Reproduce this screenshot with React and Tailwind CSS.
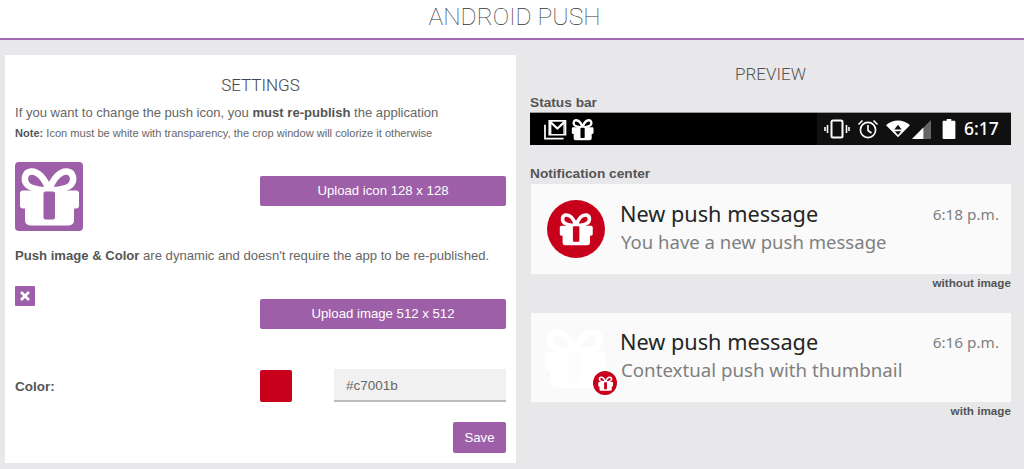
const helv = "font-['Helvetica_Neue','Liberation_Sans',Arial,sans-serif]";

function Gift({ className, fg = "#fff", bg = "#9d5fa8" }) {
  return (
    <svg viewBox="0 0 68 68" className={className}>
      <path d="M34 28 C30 16 23 8.5 16 9 C9.5 9.5 8.5 17 11.5 21.5 C15 26.5 25 27.5 34 28 C43 27.5 53 26.5 56.5 21.5 C59.5 17 58.5 9.5 52 9 C45 8.5 38 16 34 28 Z" fill="none" stroke={fg} strokeWidth="6.5" />
      <path d="M8 28 H61 A3 3 0 0 1 64 31 V43 A3 3 0 0 1 61 46 H59 V58 A5 5 0 0 1 54 63 H15 A5 5 0 0 1 10 58 V46 H8 A3 3 0 0 1 5 43 V31 A3 3 0 0 1 8 28 Z" fill={fg} />
      <rect x="28.5" y="29" width="11.5" height="28" rx="2" fill={bg} />
    </svg>
  );
}

function PurpleButton({ children }) {
  return (
    <div className="h-[30px] bg-[#9d5fa8] rounded-[2px] text-white text-[13.2px] font-light flex items-center justify-center">
      {children}
    </div>
  );
}

function Notification({ time, message, withImage }) {
  return (
    <div className={`relative bg-[#fafafa] flex ml-px ${withImage ? "h-[89px]" : "h-[90px]"}`}>
      <div className="w-[89px] shrink-0 flex items-center justify-center">
        {withImage ? (
          <Gift className="w-[70px] h-[70px] ml-[-2px]" fg="#ffffff" bg="#fdfdfd" />
        ) : (
          <div className="w-[58px] h-[58px] rounded-full bg-[#c7001b] flex items-center justify-center">
            <Gift className="w-[38px] h-[38px]" bg="#c7001b" />
          </div>
        )}
      </div>
      {withImage && (
        <div className="absolute left-[62px] top-[58px] w-[24px] h-[24px] rounded-full bg-[#c7001b] flex items-center justify-center">
          <Gift className="w-[17px] h-[17px]" bg="#c7001b" />
        </div>
      )}
      <div className={`flex-1 font-['Noto_Sans','Open_Sans',sans-serif] ${withImage ? "pt-[12px]" : "pt-[13px]"}`}>
        <div className="flex justify-between items-center pr-[12px] h-[34px]">
          <span className="text-[21.7px] text-[#252525]">New push message</span>
          <span className="text-[15.3px] text-[#808080]">{time}</span>
        </div>
        <div className={`text-[#808080] leading-[26px] mt-[-2px] pl-px ${withImage ? "text-[18.7px]" : "text-[18.55px]"}`}>{message}</div>
      </div>
    </div>
  );
}

function StatusIcons() {
  return (
    <div className="w-[194px] bg-[#101010] flex items-center pl-[7px] text-white">
      <svg viewBox="0 0 26 22" className="w-[26px] h-[22px]" fill="none" stroke="#fff">
        <rect x="7.5" y="2.5" width="11" height="17" rx="1.5" strokeWidth="2" />
        <path d="M3.5 7v8M1 9v4M22.5 7v8M25 9v4" strokeWidth="1.6" />
      </svg>
      <svg viewBox="0 0 22 22" className="w-[22px] h-[22px] ml-[7px]" fill="none" stroke="#fff" strokeWidth="1.6">
        <circle cx="11" cy="12" r="7.6" />
        <path d="M11 7v5.5l3.5 2.5M1.5 6.5L5.5 2.5M20.5 6.5L16.5 2.5" />
      </svg>
      <svg viewBox="0 0 26 20" className="w-[24px] h-[20px] ml-[7px]">
        <path d="M0 6 C7 -1 19 -1 26 6 L13 19 Z" fill="#fff" />
        <path d="M13 5.5 L17 10.5 H9 Z" fill="#101010" />
        <path d="M9.5 12.5 H16.5 L13 16.5 Z" fill="#101010" />
      </svg>
      <svg viewBox="0 0 20 20" className="w-[19px] h-[19px] ml-[2px]">
        <path d="M0 20 L20 0 V20 Z" fill="#666" />
        <path d="M0 20 L12 8 V20 Z" fill="#fff" />
      </svg>
      <svg viewBox="0 0 14 22" className="w-[14px] h-[20px] ml-[11px]">
        <path d="M4.5 0 H9.5 V2 H13 A1 1 0 0 1 14 3 V21 A1 1 0 0 1 13 22 H1 A1 1 0 0 1 0 21 V3 A1 1 0 0 1 1 2 H4.5 Z" fill="#fff" />
      </svg>
      <span className="ml-[8px] text-[17.5px] font-medium font-['Noto_Sans',sans-serif] leading-none">6:17</span>
    </div>
  );
}

export default function App() {
  return (
    <div className={`w-[1024px] h-[469px] overflow-hidden bg-[#e8e8ea] ${helv}`}>
      <header className="h-[40px] bg-white border-b-2 border-[#a268ae] flex items-center justify-center">
        <h1 className="font-['Roboto',sans-serif] font-thin text-[24.6px] text-[#333] mt-[-4px] ml-[5px]">ANDROID PUSH</h1>
      </header>

      <div className="flex pl-[5px] pt-[15px] gap-[14px]">
        <section className="w-[511px] h-[408px] bg-white px-[10px] text-[#555]">
          <h2 className="text-center font-['Roboto',sans-serif] font-light text-[17px] leading-[20px] pt-[20px] text-[#444]">SETTINGS</h2>
          <p className="text-[13.07px] leading-[18px] mt-[9px] font-light text-[#666]">
            If you want to change the push icon, you <b className="font-bold text-[#555]">must re-publish</b> the application
          </p>
          <p className="text-[11.07px] leading-[14px] mt-[4px] text-[#666]">
            <b className="font-bold text-[#555]">Note:</b> Icon must be white with transparency, the crop window will colorize it otherwise
          </p>

          <div className="grid grid-cols-[245px_246px] mt-[22px] h-[69px] items-start">
            <div className="w-[68px] h-[69px] bg-[#9d5fa8] rounded-[4px]">
              <Gift className="w-[68px] h-[69px]" />
            </div>
            <div className="pt-[14px]">
              <PurpleButton>Upload icon 128 x 128</PurpleButton>
            </div>
          </div>

          <p className="text-[13.1px] leading-[18px] mt-[16px] font-light text-[#666]">
            <b className="font-bold text-[#555]">Push image &amp; Color</b> are dynamic and doesn't require the app to be re-published.
          </p>

          <div className="grid grid-cols-[245px_246px] mt-[21px] h-[43px]">
            <div className="w-[20px] h-[20px] bg-[#9d5fa8] rounded-[1px] flex items-center justify-center">
              <svg viewBox="0 0 10 10" className="w-[10px] h-[10px]" stroke="#fff" strokeWidth="2.8">
                <path d="M1 1L9 9M9 1L1 9" />
              </svg>
            </div>
            <div className="pt-[13px]">
              <PurpleButton>Upload image 512 x 512</PurpleButton>
            </div>
          </div>

          <div className="grid grid-cols-[245px_246px] mt-[40px] items-center">
            <b className="text-[13.5px] font-bold pt-[4px]">Color:</b>
            <div className="flex justify-between items-center">
              <div className="w-[32px] h-[32px] bg-[#c7001b] rounded-[2px]"></div>
              <div className="w-[172px] h-[33px] bg-[#f1f1f1] border-b-2 border-[#bbb] pl-[12px] pt-[3px] flex items-center text-[13.5px] text-[#666]">#c7001b</div>
            </div>
          </div>

          <div className="flex justify-end mt-[20px]">
            <div className="w-[53px] h-[31px] bg-[#9d5fa8] rounded-[2px] text-white text-[13.2px] font-light flex items-center justify-center">Save</div>
          </div>
        </section>

        <section className="w-[481px] text-[#555]">
          <h2 className="text-center font-['Roboto',sans-serif] font-light text-[17px] leading-[20px] pt-[9px] text-[#555]">PREVIEW</h2>
          <div className="text-[13.7px] font-bold leading-[14px] mt-[12px]">Status bar</div>
          <div className="h-[33px] mt-[2px] bg-black border-t border-[#999] flex justify-between">
            <div className="flex items-center pl-[13px] gap-[3px]">
              <svg viewBox="0 0 24 22" className="w-[24px] h-[21px]" fill="none" stroke="#fff">
                <path d="M6 2H23V16.5H6Z" strokeWidth="1.8" />
                <path d="M7 3L14.5 10L22 3" strokeWidth="2.2" />
                <path d="M7.5 3V16M21.5 3V16" strokeWidth="1.4" />
                <path d="M1.5 6V20.5H21" strokeWidth="1.8" />
              </svg>
              <Gift className="w-[25px] h-[25px]" bg="#000" />
            </div>
            <StatusIcons />
          </div>

          <div className="text-[13.7px] font-bold leading-[14px] mt-[22px] mb-[3px]">Notification center</div>
          <Notification time="6:18 p.m." message="You have a new push message" />
          <div className="text-right text-[11.7px] font-bold leading-[14px] mt-[2px]">without image</div>

          <div className="mt-[23px]">
            <Notification time="6:16 p.m." message="Contextual push with thumbnail" withImage />
          </div>
          <div className="text-right text-[11.7px] font-bold leading-[14px] mt-[2px]">with image</div>
        </section>
      </div>
    </div>
  );
}
